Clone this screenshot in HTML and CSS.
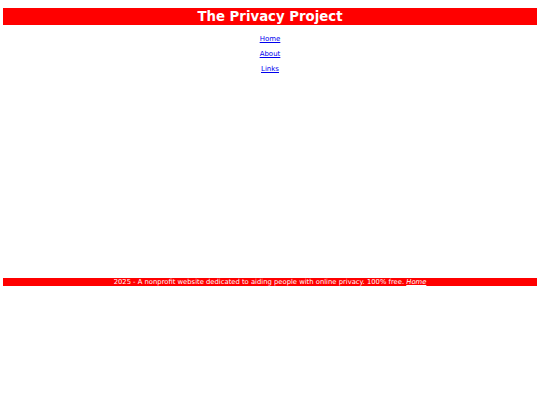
FILE: index.html
```html
<!DOCTYPE html>
<html>
<head>
<meta charset="utf-8">
<link rel="stylesheet" href="styles.css">
<title>The Privacy Project</title>
</head>
<body>
<div class="page">
  <header class="banner"><h1 class="title">The Privacy Project</h1></header>
  <nav class="nav">
    <a href="#">Home</a>
    <a href="#">About</a>
    <a href="#">Links</a>
  </nav>
  <footer class="footer">2025 - A nonprofit website dedicated to aiding people with online privacy. 100% free. <a href="#" class="footer-link">Home</a></footer>
</div>
</body>
</html>
```
FILE: styles.css
```css
html, body { margin: 0; padding: 0; background: #fff; }
body { font-family: "DejaVu Sans", Verdana, sans-serif; }
.page { padding: 8px 3px 0; }
.banner { background: #ff0000; height: 17px; display: flex; align-items: center; justify-content: center; }
.title { margin: 0; color: #fff; font-size: 13.3px; font-weight: bold; line-height: 17px; }
.nav { display: flex; flex-direction: column; align-items: center; gap: 5px; padding-top: 9px; height: 253px; box-sizing: border-box; }
.nav a { color: #0000ee; font-size: 7px; line-height: 10px; text-decoration: underline; }
.footer { background: #ff0000; color: #fff; text-align: center; font-size: 6.8px; line-height: 8px; height: 8px; }
.footer-link { color: #fff; font-style: italic; text-decoration: underline; }
```
